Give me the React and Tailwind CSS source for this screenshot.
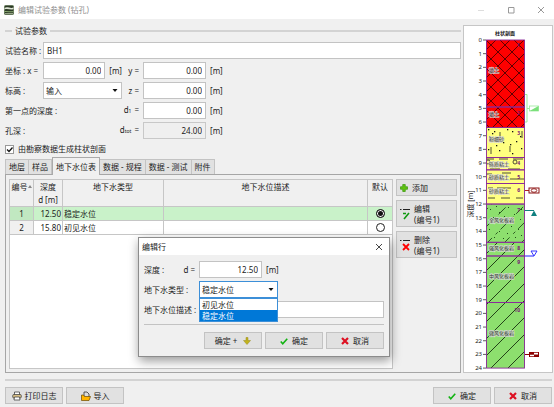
import { useState } from 'react';

const tabs = ['地层', '样品', '地下水位表', '数据 - 规程', '数据 - 测试', '附件'];

const waterRows = [
  { id: 1, depth: '12.50', type: '稳定水位' },
  { id: 2, depth: '15.80', type: '初见水位' },
];

const waterTypes = ['初见水位', '稳定水位'];

// y = 40 is the surface, one metre is 13.67 units
const depthToY = (depth) => 40 + depth * 13.67;

const layers = [
  { from: 0, to: 4.9, fill: '#ff0000', name: '填土', nameY: 72, no: 1, noY: 47 },
  { from: 4.9, to: 6.4, fill: '#ff0000', name: '填土', nameY: 116, no: 2, noY: 115 },
  { from: 6.4, to: 8.6, fill: '#ffff80', name: '粉细砂', nameY: 141, no: 3, noY: 135 },
  { from: 8.6, to: 9.5, fill: '#ffff80', name: '砾质粘土', nameY: 166, no: 4, noY: 165 },
  { from: 9.5, to: 10.5, fill: '#ffff80', name: '砂质粘土', nameY: 179, no: 5, noY: 179 },
  { from: 10.5, to: 12, fill: '#ffff80', name: '砂质粘土', nameY: 193, no: 6, noY: 192 },
  { from: 12, to: 14.8, fill: '#8ddf6e', name: '全风化板岩', nameY: 222, no: 7, noY: 212 },
  { from: 14.8, to: 15.8, fill: '#8ddf6e', name: '强风化板岩', nameY: 250, no: 8, noY: 250 },
  { from: 15.8, to: 19.2, fill: '#8ddf6e', name: '中风化板岩', nameY: 278, no: 9, noY: 264 },
  { from: 19.2, to: 24, fill: '#8ddf6e', name: '微风化板岩', nameY: 335, no: 10, noY: 312 },
];

const sandDots = [
  [488, 129], [494, 131], [507, 129], [512, 131], [520, 136], [489, 136], [503, 142],
  [510, 144], [496, 145], [521, 148], [488, 149], [516, 141], [499, 150], [512, 153], [492, 133],
];

const rockDots = [
  [490, 209], [499, 212], [508, 207], [514, 214], [493, 217], [504, 216], [520, 219],
  [511, 226], [518, 229], [489, 229], [499, 231], [507, 233], [515, 237], [494, 237], [521, 235],
  [488, 224], [503, 238], [521, 209], [496, 206], [512, 219],
];

const AddIcon = () => (
  <svg viewBox="0 0 16 16" className="size-2 shrink-0">
    <path d="M5.500 1h5v4.500H15v5h-4.500V15h-5v-4.500H1v-5h4.500z" fill="#5fc20e" stroke="#3c9a12" strokeWidth="1.500" />
  </svg>
);

const EditIcon = () => (
  <svg viewBox="0 0 10 12" className="h-3 w-2.5 shrink-0">
    <path d="M0 1.500h1.500M3 1.500h7" stroke="#222" strokeWidth="1.200" />
    <path d="M3 5.500h3M9 5L4 11" fill="none" stroke="#119a11" strokeWidth="1.600" />
  </svg>
);

const DeleteIcon = () => (
  <svg viewBox="0 0 10 12" className="h-3 w-2.5 shrink-0">
    <path d="M0 1.500h1.500M3 1.500h7" stroke="#222" strokeWidth="1.200" />
    <path d="M3 5l6 6M9 5l-6 6" fill="none" stroke="#f00" strokeWidth="1.800" />
  </svg>
);

const CheckIcon = () => (
  <svg viewBox="0 0 16 16" className="size-2 shrink-0">
    <path d="M1.500 9l4 4.500L14.500 3.500" fill="none" stroke="#12b312" strokeWidth="3.200" />
  </svg>
);

const CrossIcon = () => (
  <svg viewBox="0 0 16 16" className="size-2 shrink-0">
    <path d="M2 2l12 12M14 2L2 14" stroke="#dd1022" strokeWidth="4.400" />
  </svg>
);

const DownIcon = () => (
  <svg viewBox="0 0 16 16" className="size-2 shrink-0">
    <path d="M6 1h4v6h5l-7 8-7-8h5z" fill="#c2b31c" stroke="#96891a" />
  </svg>
);

const PrinterIcon = () => (
  <svg viewBox="0 0 20 20" className="size-2.5 shrink-0">
    <path d="M5 8V2h10v6" fill="#fff" stroke="#444" strokeWidth="1.600" />
    <rect x="1.500" y="7" width="17" height="7" rx="2" fill="#d8bf87" stroke="#444" strokeWidth="1.600" />
    <path d="M5 12h10l1 6H4z" fill="#fff" stroke="#444" strokeWidth="1.600" />
  </svg>
);

const ImportIcon = () => (
  <svg viewBox="0 0 20 20" className="size-2.5 shrink-0">
    <path d="M6 11V2h6l4 4v6" fill="#ddd" stroke="#333" strokeWidth="1.600" />
    <path d="M1 8h4l2 3h12l-3 8H1z" fill="#ffb400" stroke="#6b4a00" strokeWidth="1.400" />
  </svg>
);

const AppIcon = () => (
  <svg viewBox="0 0 20 20" className="size-2.5">
    <rect x="0.500" y="0.500" width="19" height="19" rx="3" fill="#2c3a26" stroke="#6c8a5c" />
    <path d="M1 6c5-4 12 2 18-1v3c-6 3-12-2-18 1z" fill="#dfe6d6" />
    <path d="M1 12c6-1 11 2 18 0v2c-6 2-12-1-18 0z" fill="#8cab74" />
    <path d="M2 17h16" stroke="#b9c9a8" strokeWidth="1.500" />
  </svg>
);

function Button({ children, className = '' }) {
  return (
    <button
      type="button"
      className={`flex items-center border border-[#c3c3c3] bg-[#e1e1e1] leading-[11px] whitespace-nowrap ${className}`}
    >
      {children}
    </button>
  );
}

function Field({ className = '', ...props }) {
  return (
    <input
      type="text"
      className={`h-[17px] min-w-0 border border-[#c3c3c3] bg-white px-[3px] leading-3 outline-none ${className}`}
      {...props}
    />
  );
}

function Select({ options, className = '', ...props }) {
  return (
    <div className="relative w-[79px]">
      <select
        className={`block h-[17px] w-full appearance-none border bg-white px-0.5 leading-3 outline-none ${className}`}
        {...props}
      >
        {options.map((option) => (
          <option key={option}>{option}</option>
        ))}
      </select>
      <svg viewBox="0 0 6 3" className="pointer-events-none absolute top-[7px] right-1 h-[3px] w-1.5">
        <path d="M0.500 0h5L3 3z" fill="#111" />
      </svg>
    </div>
  );
}

function TitleBar() {
  return (
    <header className="flex h-[19px] items-center bg-white pr-[9px] pl-1">
      <AppIcon />
      <h1 className="ml-1 flex-1 text-[#8f8f8f]">编辑试验参数 (钻孔)</h1>
      <div className="flex items-center gap-[22px]">
        <button type="button" aria-label="最小化">
          <svg viewBox="0 0 8 8" className="size-2"><path d="M1 4.500h6" stroke="#ddd" /></svg>
        </button>
        <button type="button" aria-label="最大化">
          <svg viewBox="0 0 8 8" className="size-2"><path d="M1.500 1.500h5.500v5.500h-5.500z" fill="none" stroke="#999" /></svg>
        </button>
        <button type="button" aria-label="关闭">
          <svg viewBox="0 0 8 8" className="size-2"><path d="M1 1l6 6M7 1l-6 6" stroke="#999" /></svg>
        </button>
      </div>
    </header>
  );
}

function ParameterForm() {
  return (
    <fieldset className="min-w-0">
      <div className="flex h-[23px] items-center gap-[3px]">
        <span className="h-0.5 w-[7px] bg-[#d3d3d3]" />
        <legend>试验参数</legend>
        <span className="h-0.5 flex-1 bg-[#d3d3d3]" />
      </div>
      <div className="flex items-center">
        <label htmlFor="name" className="w-[38px] whitespace-nowrap">试验名称 :</label>
        <Field id="name" defaultValue="BH1" className="flex-1" />
      </div>
      <div className="mt-[3px] grid grid-cols-[38px_79px_21px_63px_1fr] items-center gap-y-[3px] whitespace-nowrap">
        <label htmlFor="x">坐标 : x =</label>
        <div className="flex items-center gap-1">
          <Field id="x" defaultValue="0.00" className="w-[63px] text-right" />
          <span>[m]</span>
        </div>
        <label htmlFor="y" className="pr-1 text-right">y =</label>
        <Field id="y" defaultValue="0.00" className="text-right" />
        <span className="pl-1">[m]</span>

        <label htmlFor="level">标高 :</label>
        <Select id="level" options={['输入']} className="border-[#c3c3c3]" />
        <label htmlFor="z" className="pr-1 text-right">z =</label>
        <Field id="z" defaultValue="0.00" className="text-right" />
        <span className="pl-1">[m]</span>

        <span className="col-span-2">第一点的深度 :</span>
        <label htmlFor="d1" className="flex items-baseline justify-end pr-1">
          d<small className="mr-[3px] text-[5px]">1</small>=
        </label>
        <Field id="d1" defaultValue="0.00" className="text-right" />
        <span className="pl-1">[m]</span>

        <span className="col-span-2">孔深 :</span>
        <label htmlFor="dtot" className="flex items-baseline justify-end pr-1">
          d<small className="mr-[3px] text-[5px]">tot</small>=
        </label>
        <input
          id="dtot"
          readOnly
          value="24.00"
          className="h-[17px] min-w-0 border border-[#c8c8c8] bg-[#efefef] px-[3px] text-right leading-3 outline-none"
        />
        <span className="pl-1">[m]</span>
      </div>
      <label className="mt-1 flex h-3 items-center gap-1">
        <span className="relative size-[9px]">
          <input type="checkbox" defaultChecked className="block size-[9px] appearance-none border border-[#999] bg-white" />
          <svg viewBox="0 0 9 9" className="pointer-events-none absolute inset-0 size-[9px]">
            <path d="M2 4.500l2 2L7.500 2.500" fill="none" stroke="#111" strokeWidth="1.300" />
          </svg>
        </span>
        由勘察数据生成柱状剖面
      </label>
    </fieldset>
  );
}

function WaterTable() {
  const [selected, setSelected] = useState(1);
  const head = 'border-r border-b border-[#c6c6c6] p-0 align-top font-normal';
  const cell = 'border-r border-b border-[#c6c6c6] p-0';

  return (
    <div className="flex-1 border border-[#c6c6c6] bg-white">
      <table className="w-full table-fixed border-separate border-spacing-0 leading-[13px]">
        <colgroup>
          <col className="w-6" />
          <col className="w-[29px]" />
          <col className="w-[101px]" />
          <col />
          <col className="w-6" />
        </colgroup>
        <thead className="bg-[#f0f0f0]">
          <tr className="h-[27px]">
            <th className={head}>
              <span className="flex items-center justify-center whitespace-nowrap">
                编号
                <svg viewBox="0 0 4 3" className="h-[3px] w-1"><path d="M0 3l2-3 2 3z" fill="#888" /></svg>
              </span>
            </th>
            <th className={head}>深度<br />d [m]</th>
            <th className={head}>地下水类型</th>
            <th className={head}>地下水位描述</th>
            <th className="border-b border-[#c6c6c6] p-0 align-top font-normal whitespace-nowrap">默认</th>
          </tr>
        </thead>
        <tbody>
          {waterRows.map((row) => (
            <tr key={row.id} className={row.id === selected ? 'h-3.5 bg-[#c9f2c9]' : 'h-3.5'}>
              <td className={`${cell} text-center ${row.id === selected ? 'bg-[#c1e8c1]' : 'bg-[#f0f0f0]'}`}>{row.id}</td>
              <td className={`${cell} pr-px text-right`}>{row.depth}</td>
              <td className={`${cell} pl-px`}>{row.type}</td>
              <td className={cell} />
              <td className="border-b border-[#c6c6c6] p-0">
                <input
                  type="radio"
                  name="default"
                  aria-label={`默认 ${row.id}`}
                  checked={row.id === selected}
                  onChange={() => setSelected(row.id)}
                  className="mx-auto block size-[9px] appearance-none rounded-full border border-[#222] bg-white checked:bg-[#111] checked:shadow-[inset_0_0_0_1px_#fff]"
                />
              </td>
            </tr>
          ))}
        </tbody>
      </table>
    </div>
  );
}

function WaterPanel() {
  return (
    <section className="flex flex-1 flex-col">
      <div role="tablist" className="mt-0.5 flex items-end">
        {tabs.map((tab) => (
          <button
            key={tab}
            type="button"
            role="tab"
            aria-selected={tab === '地下水位表'}
            className={
              tab === '地下水位表'
                ? 'relative z-10 -mb-px h-[18px] border border-b-0 border-[#aaa] bg-[#f0f0f0] px-[3px] whitespace-nowrap'
                : 'h-[15px] border border-b-0 border-l-0 border-[#c3c3c3] bg-[#e1e1e1] px-[3px] whitespace-nowrap first:border-l'
            }
          >
            {tab}
          </button>
        ))}
      </div>
      <div className="flex flex-1 gap-[3px] border border-[#a6a6a6] p-[3px] pt-1">
        <WaterTable />
        <div className="flex w-[61px] flex-col gap-1">
          <Button className="h-[17px] gap-1 pl-[3px]"><AddIcon />添加</Button>
          <Button className="h-[27px] gap-1 pl-[3px] text-left"><EditIcon /><span>编辑<br />(编号1)</span></Button>
          <Button className="h-[27px] gap-1 pl-[3px] text-left"><DeleteIcon /><span>删除<br />(编号1)</span></Button>
        </div>
      </div>
    </section>
  );
}

function Hatching() {
  return (
    <>
      <g clipPath="url(#clip-fill)" stroke="#1a0000" strokeWidth="0.700">
        {Array.from({ length: 12 }, (_, i) => {
          const x = 386 + i * 14;
          return <path key={x} d={`M${x} 38l92 92M${x + 98} 38l-92 92`} />;
        })}
      </g>
      <g clipPath="url(#clip-sand)" stroke="#222" strokeWidth="0.800">
        {sandDots.map(([x, y]) => (
          <rect key={`${x}-${y}`} x={x} y={y} width="1.300" height="1.300" fill="#111" stroke="none" />
        ))}
        <path d="M491 147v7M510 146v6M500 132v6M522 131v7" />
        <path d="M486 159h8M499 159h9M513 159h10M490 169h10M508 169h12" />
        <path d="M486 174h6M502 173h9M488 179h8M510 179h14" />
        <path d="M488 188h5M497 188h14M488 198h7M501 198h9M516 198h7" />
        <circle cx="488" cy="162" r="2" fill="none" />
        <circle cx="515" cy="162" r="2" fill="none" />
      </g>
      <g clipPath="url(#clip-weathered)" stroke="#234d1a" strokeWidth="0.900">
        {[0, 1, 2, 3, 4].map((i) => (
          <path key={i} d={`M${481 + i * 2} ${215 + i * 15}l50 -50`} strokeDasharray="10 5 3 4" />
        ))}
        {rockDots.map(([x, y]) => (
          <rect key={`${x}-${y}`} x={x} y={y} width="1" height="1" fill="#234d1a" stroke="none" />
        ))}
      </g>
      <g clipPath="url(#clip-rock)" stroke="#17300f" strokeWidth="0.900">
        {Array.from({ length: 12 }, (_, i) => (
          <path key={i} d={`M480 ${243 + i * 17}l56 -56`} />
        ))}
      </g>
    </>
  );
}

function ProfileChart() {
  return (
    <aside className="flex w-[90px] border border-[#c6c6c6] bg-white">
      <svg viewBox="464 26 88 346" className="h-full w-full" role="img" aria-label="柱状剖面">
        <defs>
          <clipPath id="clip-fill"><rect x="486" y="40" width="39" height="87.500" /></clipPath>
          <clipPath id="clip-sand"><rect x="486" y="127.500" width="39" height="76.500" /></clipPath>
          <clipPath id="clip-weathered"><rect x="486" y="204" width="39" height="38" /></clipPath>
          <clipPath id="clip-rock"><rect x="486" y="242" width="39" height="126" /></clipPath>
        </defs>
        <text x="505" y="35" textAnchor="middle" fontSize="5" fontWeight="700" fill="#111">柱状剖面</text>
        {layers.map((layer) => (
          <rect key={layer.no} x="486" y={depthToY(layer.from)} width="39" height={(layer.to - layer.from) * 13.67} fill={layer.fill} />
        ))}
        <Hatching />
        {layers.map((layer) => (
          <g key={layer.no}>
            <rect
              x="486.500"
              y={depthToY(layer.from)}
              width="38"
              height={(layer.to - layer.from) * 13.67}
              fill="none"
              stroke="#8a2a9a"
              strokeWidth="0.900"
            />
            <text x="489" y={layer.nameY} fontSize="5" fill="#333" stroke="#dcdcdc" strokeWidth="1.500" strokeOpacity="0.8" paintOrder="stroke">
              {layer.name}
            </text>
            <text x="520" y={layer.noY} textAnchor="end" fontSize="5" fontWeight="700" fill="#7a1478">{layer.no}</text>
          </g>
        ))}
        {Array.from({ length: 25 }, (_, depth) => (
          <g key={depth}>
            <path d={`M483 ${depthToY(depth)}h3`} stroke="#333" strokeWidth="0.800" />
            <text x="482" y={depthToY(depth) + 2} textAnchor="end" fontSize="6" fill="#222">{depth}</text>
          </g>
        ))}
        <text transform="translate(473 204) rotate(-90)" textAnchor="middle" fontSize="7" fill="#222">深度 [m]</text>

        <path d="M525 94.500h2v27.500h-2M527 108.500h2" fill="none" stroke="#9be89b" />
        <rect x="529.500" y="106" width="9" height="5" fill="#fff" stroke="#9be89b" strokeWidth="0.800" />
        <path d="M529.500 111l9-5v5z" fill="#7be07b" />
        <path d="M525 190.500h4" stroke="#b02020" />
        <rect x="529" y="188" width="10" height="5" fill="#fff" stroke="#8b1010" />
        <ellipse cx="534" cy="190.500" rx="2.800" ry="1.800" fill="#fff" stroke="#8b1010" strokeWidth="0.900" />
        <path d="M525 210.500h9" stroke="#108080" />
        <path d="M531 216l3-5.500 3 5.500z" fill="#108080" />
        <path d="M525 256h9" stroke="#2020ff" />
        <path d="M531 251h6l-3 5z" fill="#fff" stroke="#2020ff" strokeWidth="0.900" />
        <path d="M525 354.500h4" stroke="#8b0000" />
        <rect x="529" y="352" width="10" height="5" fill="#8b0000" />
        <path d="M534 352.800h4v1.700h-4zM530 354.800h4v1.500h-4z" fill="#fff" />
      </svg>
    </aside>
  );
}

function EditDialog() {
  return (
    <div
      role="dialog"
      aria-labelledby="dialog-title"
      className="absolute top-[237px] left-[138px] z-20 w-[252px] border border-[#8c8c8c] bg-[#f0f0f0] shadow-[1px_4px_10px_rgba(0,0,0,0.4)]"
    >
      <div className="flex h-[17px] items-center justify-between bg-white pr-1.5 pl-[3px]">
        <h2 id="dialog-title">编辑行</h2>
        <button type="button" aria-label="关闭">
          <svg viewBox="0 0 8 8" className="size-2"><path d="M1 1l6 6M7 1l-6 6" stroke="#333" strokeWidth="0.900" /></svg>
        </button>
      </div>
      <div className="px-[5px] pt-1.5 pb-[7px]">
        <div className="grid grid-cols-[55px_1fr] items-center gap-y-[3px] whitespace-nowrap">
          <label htmlFor="depth" className="flex justify-between pr-1"><span>深度 :</span><span>d =</span></label>
          <div className="flex items-center gap-1">
            <Field id="depth" defaultValue="12.50" className="w-[63px] text-right" />
            <span>[m]</span>
          </div>
          <label htmlFor="type">地下水类型 :</label>
          <div className="relative">
            <Select id="type" options={waterTypes} defaultValue="稳定水位" className="border-[#3c8fd8]" />
            <ul role="listbox" aria-label="地下水类型" className="absolute top-[17px] left-0 w-[79px] border border-[#3c8fd8] bg-white">
              {waterTypes.map((type) => (
                <li
                  key={type}
                  role="option"
                  aria-selected={type === '稳定水位'}
                  className="px-0.5 leading-[11px] aria-selected:bg-[#0078d7] aria-selected:text-white"
                >
                  {type}
                </li>
              ))}
            </ul>
          </div>
          <label htmlFor="description">地下水位描述 :</label>
          <Field id="description" />
        </div>
        <hr className="mt-1.5 mb-[7px] border-[#c3c3c3]" />
        <div className="flex justify-end gap-[3px]">
          <Button className="h-[17px] w-[58px] justify-center gap-1.5"><span>确定 +</span><DownIcon /></Button>
          <Button className="h-[17px] w-[58px] justify-center gap-1"><CheckIcon />确定</Button>
          <Button className="h-[17px] w-[58px] justify-center gap-1"><CrossIcon />取消</Button>
        </div>
      </div>
    </div>
  );
}

export default function App() {
  return (
    <div className="relative flex min-h-screen flex-col bg-[#f0f0f0] font-['Noto_Sans','Noto_Sans_CJK_SC',sans-serif] text-[8px] leading-3 text-[#222]">
      <TitleBar />
      <div className="flex flex-1 gap-0.5 pr-px pl-[5px]">
        <main className="flex min-w-0 flex-1 flex-col">
          <ParameterForm />
          <WaterPanel />
        </main>
        <div className="flex pt-1.5">
          <ProfileChart />
        </div>
      </div>
      <footer className="mr-0.5 ml-[5px] pt-1.5 pb-[3px]">
        <hr className="border-t-2 border-[#d3d3d3]" />
        <div className="flex gap-[3px] pt-1.5">
          <Button className="h-[17px] w-[58px] justify-center gap-[3px]"><PrinterIcon />打印日志</Button>
          <Button className="h-[17px] w-[58px] justify-center gap-[3px]"><ImportIcon />导入</Button>
          <div className="flex-1" />
          <Button className="h-[17px] w-[58px] justify-center gap-1"><CheckIcon />确定</Button>
          <Button className="h-[17px] w-[58px] justify-center gap-1"><CrossIcon />取消</Button>
        </div>
      </footer>
      <EditDialog />
    </div>
  );
}
